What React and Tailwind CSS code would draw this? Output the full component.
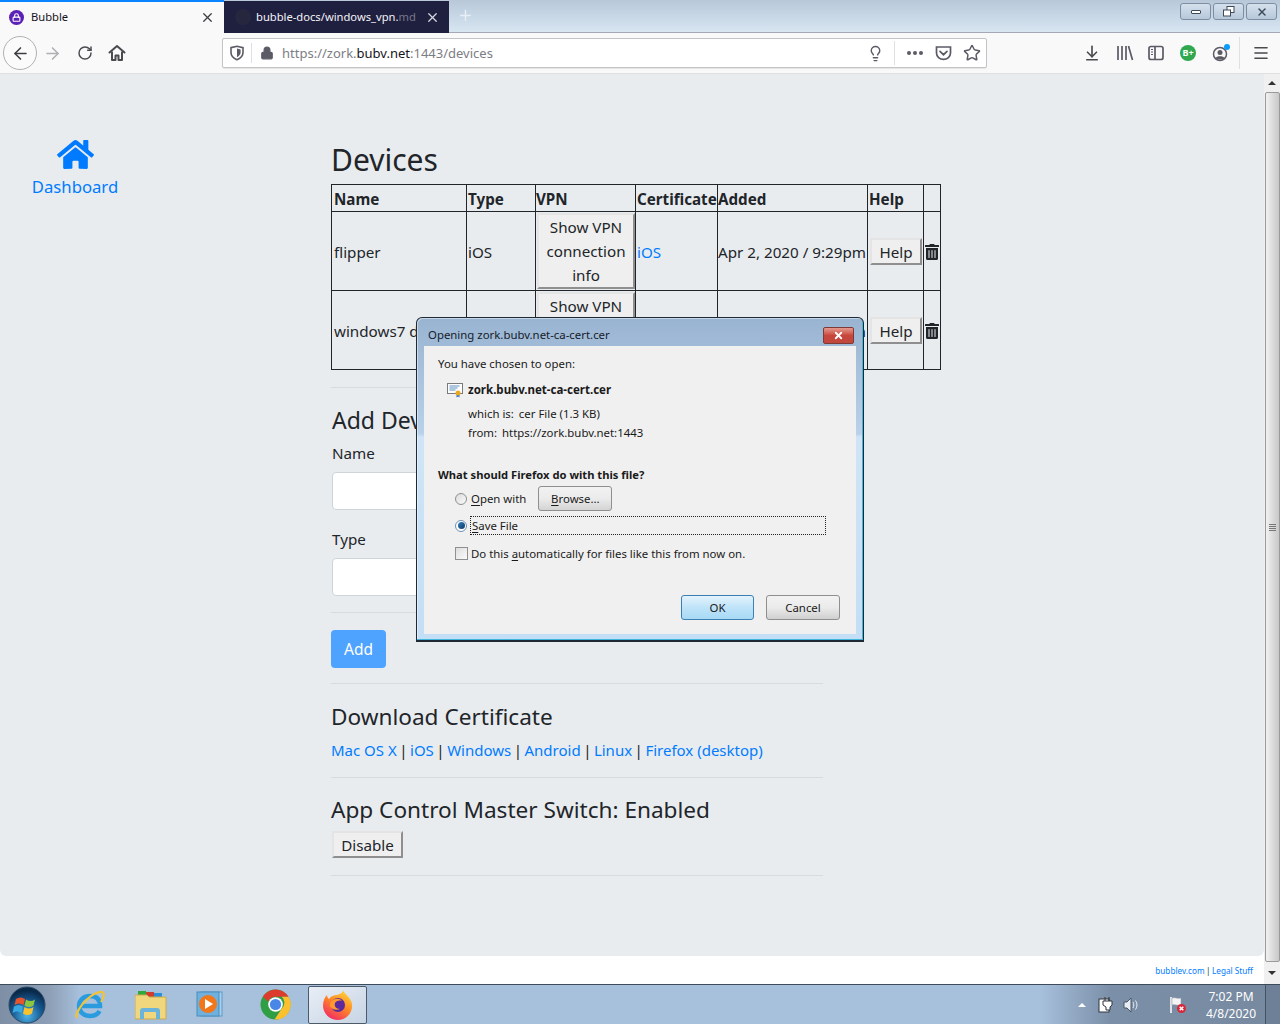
import { FaHome, FaTrashAlt } from 'react-icons/fa';
import { ArrowLeft, ArrowRight, RotateCw, Lock, Lightbulb, Star, ArrowDownToLine, X, Plus, Menu } from 'lucide-react';

const FONT = "font-['Noto_Sans','Open_Sans',sans-serif]";

function Shield() {
  return (
    <svg width="16" height="16" viewBox="0 0 16 16" fill="none" stroke="#5b5b66" strokeWidth="1.6">
      <path d="M2 2.6 8 1.2l6 1.4v5c0 3.4-2.6 5.800-6 7.200-3.400-1.400-6-3.800-6-7.200z" />
      <path d="M8 3.6 11.6 4.4v3.200c0 2-1.400 3.400-3.600 4.600z" fill="#5b5b66" stroke="none" />
    </svg>
  );
}

function Pocket() {
  return (
    <svg width="17" height="16" viewBox="0 0 17 16" fill="none" stroke="#5b5b66" strokeWidth="1.7">
      <path d="M1.500 2h14v6c0 3.600-3.200 6.400-7 6.400S1.500 11.600 1.500 8z" />
      <path d="m5 6.300 3.500 3.400L12 6.300" strokeLinecap="round" />
    </svg>
  );
}

function Library() {
  return (
    <svg width="18" height="16" viewBox="0 0 18 16" stroke="#5b5b66" strokeWidth="1.700" fill="none">
      <path d="M2 1v14M6 1v14M10 1v14M12.500 1l4 14" />
    </svg>
  );
}

function SidebarIcon() {
  return (
    <svg width="16" height="16" viewBox="0 0 16 16" fill="none" stroke="#5b5b66" strokeWidth="1.700">
      <rect x="1" y="1.500" width="14" height="13" rx="2" />
      <path d="M7 2v12" />
      <path d="M3 4.500h2M3 7h2M3 9.500h2" strokeWidth="1.200" />
    </svg>
  );
}

function Account() {
  return (
    <svg width="20" height="20" viewBox="0 0 20 20">
      <circle cx="9" cy="11" r="6.500" fill="none" stroke="#5b5b66" strokeWidth="1.500" />
      <circle cx="9" cy="9.500" r="2.500" fill="#5b5b66" />
      <path d="M4.500 15c1-2.500 8-2.500 9 0-2 2-7 2-9 0z" fill="#5b5b66" />
      <circle cx="16" cy="4" r="3" fill="#0a9dff" />
    </svg>
  );
}

function HomeSolid() {
  return (
    <svg width="18" height="18" viewBox="0 0 18 18" fill="none" stroke="#4a4a4f" strokeWidth="2">
      <path d="M1.500 8.500 9 2l7.500 6.500" strokeLinecap="round" strokeLinejoin="round" />
      <path d="M4 7.500V16h3.500v-4.500h3V16H14V7.500" strokeLinejoin="round" />
    </svg>
  );
}

function TabBar() {
  return (
    <div className="h-[33px] flex items-start bg-gradient-to-b from-[#b8c8d9] to-[#d8e6f2] border-b border-[#a3aab5] shrink-0 relative">
      <div className="w-[224px] h-[33px] bg-[#f9f9fa] border-t-2 border-[#0a84ff] flex items-center pl-[9px] pr-[9px] relative z-10">
        <div className="w-[15px] h-[15px] rounded-full bg-[#5b21b6] flex items-center justify-center">
          <Lock size={9} color="#ffffff" strokeWidth={3} />
        </div>
        <span className="ml-[7px] text-[11.200px] text-[#15141a]">Bubble</span>
        <X size={15} color="#3b3b42" className="ml-auto" strokeWidth={2} />
      </div>
      <div className="w-[225px] h-[32px] mt-px bg-[#1f2040] flex items-center pl-[11px] pr-[9px]">
        <div className="w-[16px] h-[16px] rounded-full bg-[#26273f]" />
        <span className="ml-[5px] pt-px text-[11.200px] text-[#f4f4f6] whitespace-nowrap">bubble-docs/windows_vpn.<span className="text-[#77778a]">md</span></span>
        <X size={15} color="#d7d7dd" className="ml-auto" strokeWidth={2} />
      </div>
      <Plus size={17} color="#e8eef5" className="ml-[8px] mt-[7px]" strokeWidth={2} />
      <div className="ml-auto flex gap-[2px] mt-[3px] mr-[3px]">
        {['min', 'max', 'close'].map((k) => (
          <div key={k} className="w-[31px] h-[17px] rounded-[3px] border border-[#7d8ea3] bg-gradient-to-b from-[#d5e0ec] to-[#b7c8da] flex items-center justify-center">
            {k === 'min' && <div className="w-[10px] h-[4px] border border-[#3d4a5a] bg-white rounded-[1px]" />}
            {k === 'max' && (
              <svg width="12" height="11" viewBox="0 0 12 11" fill="#fff" stroke="#3d4a5a">
                <rect x="4" y="0.500" width="7" height="6" />
                <rect x="0.500" y="4" width="7" height="6" />
              </svg>
            )}
            {k === 'close' && <X size={12} color="#3d4a5a" strokeWidth={3} />}
          </div>
        ))}
      </div>
    </div>
  );
}

function NavBar() {
  return (
    <div className="h-[41px] bg-[#f9f9fa] border-b border-[#e0e0e2] flex items-center shrink-0">
      <div className="w-[34px] h-[34px] ml-[3px] rounded-full border border-[#b1b1b3] bg-[#fbfbfb] flex items-center justify-center">
        <ArrowLeft size={19} color="#3e3e44" strokeWidth={2} />
      </div>
      <ArrowRight size={19} color="#b0b0b3" strokeWidth={2} className="ml-[6px]" />
      <RotateCw size={16} color="#4a4a4f" strokeWidth={2.200} className="ml-[15px]" />
      <div className="ml-[15px] flex"><HomeSolid /></div>
      <div className="ml-[96px] w-[765px] h-[30px] bg-white border border-[#c4c4c6] rounded-[2px] flex items-center shadow-[0_1px_1px_rgba(0,0,0,0.08)]">
        <div className="w-[28px] flex justify-center"><Shield /></div>
        <div className="w-px h-[20px] bg-[#e0e0e2]" />
        <Lock size={14} color="#5b5b66" fill="#5b5b66" strokeWidth={2} className="ml-[8px]" />
        <span className="ml-[8px] pt-px text-[13px] text-[#7d7d84]">
          https://zork.<span className="text-[#15141a]">bubv.net</span>:1443/devices
        </span>
        <Lightbulb size={17} color="#5b5b66" strokeWidth={2} className="ml-auto" />
        <div className="w-px h-[24px] bg-[#e0e0e2] ml-[10px]" />
        <div className="ml-[12px] flex gap-[2px]">
          <i className="w-[4px] h-[4px] rounded-full bg-[#5b5b66]" />
          <i className="w-[4px] h-[4px] rounded-full bg-[#5b5b66]" />
          <i className="w-[4px] h-[4px] rounded-full bg-[#5b5b66]" />
        </div>
        <div className="ml-[12px] flex"><Pocket /></div>
        <Star size={18} color="#5b5b66" strokeWidth={2} className="ml-[11px] mr-[5px]" />
      </div>
      <ArrowDownToLine size={18} color="#4a4a4f" strokeWidth={2.200} className="ml-[96px]" />
      <div className="ml-[15px] flex"><Library /></div>
      <div className="ml-[14px] flex"><SidebarIcon /></div>
      <div className="ml-[16px] w-[16px] h-[16px] rounded-full bg-[#2fa84f] text-white text-[9px] font-bold flex items-center justify-center">B+</div>
      <div className="ml-[15px] flex"><Account /></div>
      <div className="w-px h-[32px] bg-[#e0e0e2] ml-[8px]" />
      <Menu size={18} color="#4a4a4f" strokeWidth={2.200} className="ml-[12px]" />
    </div>
  );
}

function OutsetButton({ children, className = '' }) {
  return (
    <button className={`bg-[#efefef] border-2 border-t-[#e4e4e4] border-l-[#e4e4e4] border-r-[#8f8f8f] border-b-[#8f8f8f] text-[#212529] text-[15.200px] leading-[24px] ${className}`}>
      {children}
    </button>
  );
}

const devices = [
  { name: 'flipper', type: 'iOS', cert: 'iOS', added: 'Apr 2, 2020 / 9:29pm' },
  { name: 'windows7 desktop', type: 'Windows', cert: 'Windows', added: 'Apr 8, 2020 / 6:50pm' },
];

function DeviceTable() {
  const th = 'border border-[#212529] px-px pt-[2px] text-left font-bold align-bottom';
  const td = 'border border-[#212529] px-px pt-[2px] pb-0 align-middle whitespace-nowrap';
  return (
    <table className="table-fixed w-[609px] border-collapse text-[15.200px] leading-[24px] text-[#212529]">
      <colgroup>
        <col className="w-[135px]" />
        <col className="w-[69px]" />
        <col className="w-[100px]" />
        <col className="w-[82px]" />
        <col className="w-[150px]" />
        <col className="w-[56px]" />
        <col className="w-[17px]" />
      </colgroup>
      <thead>
        <tr className="h-[27px]">
          <th className={`${th} pl-[2px]`}>Name</th>
          <th className={th}>Type</th>
          <th className={`${th} pl-0`}>VPN</th>
          <th className={th}>Certificate</th>
          <th className={`${th} pl-0`}>Added</th>
          <th className={th}>Help</th>
          <th className={th}></th>
        </tr>
      </thead>
      <tbody>
        {devices.map((d) => (
          <tr key={d.name} className="h-[79px]">
            <td className={`${td} pl-[2px]`}>{d.name}</td>
            <td className={td}>{d.type}</td>
            <td className="border border-[#212529] p-0 align-middle">
              <OutsetButton className="w-[98px] h-[76px] block ml-px">Show VPN connection info</OutsetButton>
            </td>
            <td className={`${td} text-[#007bff]`}>{d.cert}</td>
            <td className={`${td} pl-0`}>{d.added}</td>
            <td className="border border-[#212529] p-0 align-middle">
              <OutsetButton className="w-[52px] h-[27px] block ml-[2px] leading-[22px]">Help</OutsetButton>
            </td>
            <td className="border border-[#212529] p-0 pt-px align-middle">
              <FaTrashAlt size={16} color="#212529" className="mx-auto" />
            </td>
          </tr>
        ))}
      </tbody>
    </table>
  );
}

function Rule({ className = '' }) {
  return <div className={`w-[492px] h-px bg-[#d8dadd] ${className}`} />;
}

function Page() {
  return (
    <div className="h-[882px] bg-[#e9ecef] rounded-bl-[6px] rounded-br-[6px] flex">
      <div className="w-[150px] pt-[62px] flex flex-col items-center text-[#007bff]">
        <FaHome size={37} color="#007bff" />
        <span className="text-[16.700px] leading-[28px]">Dashboard</span>
      </div>
      <div className="ml-[181px] pt-[66px] text-[#212529]">
        <h2 className="text-[30px] leading-[40px] h-[44px]">Devices</h2>
        <DeviceTable />
        <Rule className="mt-[17px]" />
        <h3 className="text-[23px] leading-[32px] mt-[16px] pl-px">Add Device</h3>
        <div className="text-[15.200px] leading-[24px] mt-[5px] pl-px">Name</div>
        <div className="w-[491px] h-[38px] bg-white border border-[#ced4da] rounded-[4px] mt-[7px] ml-px" />
        <div className="text-[15.200px] leading-[24px] mt-[17px] pl-px">Type</div>
        <div className="w-[491px] h-[38px] bg-white border border-[#ced4da] rounded-[4px] mt-[7px] ml-px" />
        <Rule className="mt-[16px]" />
        <button className="mt-[17px] w-[55px] h-[38px] pt-[2px] bg-[#4da3ff] text-white text-[15.500px] rounded-[4px]">Add</button>
        <Rule className="mt-[15px]" />
        <h3 className="text-[22.600px] leading-[32px] mt-[17px]">Download Certificate</h3>
        <div className="text-[15px] leading-[24px] mt-[5px] whitespace-nowrap flex gap-[2.500px]">
          <span className="text-[#007bff]">Mac OS X</span><span>|</span><span className="text-[#007bff]">iOS</span><span>|</span><span className="text-[#007bff]">Windows</span><span>|</span><span className="text-[#007bff]">Android</span><span>|</span><span className="text-[#007bff]">Linux</span><span>|</span><span className="text-[#007bff]">Firefox (desktop)</span>
        </div>
        <Rule className="mt-[15px]" />
        <h3 className="text-[22.600px] leading-[32px] mt-[16px] whitespace-nowrap">App Control Master Switch: Enabled</h3>
        <OutsetButton className="w-[71px] h-[27px] mt-[5px] ml-px block leading-[22px]">Disable</OutsetButton>
        <Rule className="mt-[17px]" />
      </div>
    </div>
  );
}

function Scrollbar() {
  return (
    <div className="w-[16px] bg-[#f0f0f0] flex flex-col items-center shrink-0">
      <div className="h-[18px] flex items-center">
        <div className="w-0 h-0 border-l-[4px] border-r-[4px] border-b-[4px] border-l-transparent border-r-transparent border-b-[#333333]" />
      </div>
      <div className="w-[15px] h-[870px] border border-[#9a9a9a] rounded-[2px] bg-gradient-to-r from-[#f2f2f2] via-[#dcdcdc] to-[#c8c8c8] flex flex-col items-center justify-center gap-px">
        <i className="w-[7px] h-px bg-[#777777]" />
        <i className="w-[7px] h-px bg-[#777777]" />
        <i className="w-[7px] h-px bg-[#777777]" />
        <i className="w-[7px] h-px bg-[#777777]" />
      </div>
      <div className="h-[22px] flex items-center">
        <div className="w-0 h-0 border-l-[4px] border-r-[4px] border-t-[4px] border-l-transparent border-r-transparent border-t-[#333333]" />
      </div>
    </div>
  );
}

function CertIcon() {
  return (
    <svg width="16" height="15" viewBox="0 0 16 15">
      <rect x="0.500" y="0.500" width="15" height="10" fill="#fdfdfd" stroke="#7a7a7a" />
      <path d="M2.500 3h10M2.500 5h8M2.500 7h6" stroke="#5f8fc4" />
      <path d="M9.500 11v3.500l1.500-1 1.500 1V11" fill="#2f6fd0" />
      <circle cx="11" cy="10" r="2.500" fill="#e8a820" />
    </svg>
  );
}

function Underlined({ children }) {
  return <span className="underline underline-offset-2">{children}</span>;
}

function Dialog() {
  return (
    <div className="absolute left-[416px] top-[317px] w-[448px] h-[325px] border border-[#1d2a36] border-b-2 rounded-t-[6px] bg-[linear-gradient(to_bottom,#99b4d1_0,#b9d1ea_36%,#cfe5f7_37%,#c3def5_100%)] shadow-[inset_-1px_-1px_0_#3fb6dc,inset_1px_1px_0_rgba(255,255,255,0.450)] z-20">
      <div className="h-[28px] flex items-center pl-[11px] pt-[6px] relative">
        <span className="text-[11.400px] text-[#15202b]">Opening zork.bubv.net-ca-cert.cer</span>
        <div className="absolute left-[406px] top-[9px] w-[31px] h-[17px] rounded-[2px] border border-[#7e3a36] bg-gradient-to-b from-[#e59a8f] via-[#c8463c] to-[#c0473d] flex items-center justify-center">
          <X size={11} color="#ffffff" strokeWidth={4} />
        </div>
      </div>
      <div className="mx-[7px] h-[288px] bg-[#f0f0f0] text-[11.400px] leading-[16px] text-[#1a1a1a] pl-[14px] pt-[10px]">
        <div>You have chosen to open:</div>
        <div className="flex items-center mt-[10px] ml-[9px]">
          <CertIcon />
          <span className="ml-[5px] font-bold text-[11.500px]">zork.bubv.net-ca-cert.cer</span>
        </div>
        <div className="mt-[8px] ml-[30px]">which is:<span className="ml-[5px]">cer File (1.3 KB)</span></div>
        <div className="mt-[3px] ml-[30px]">from:<span className="ml-[5px]">https://zork.bubv.net:1443</span></div>
        <div className="mt-[26px] font-bold text-[11.200px]">What should Firefox do with this file?</div>
        <div className="flex items-center mt-[3px] ml-[17px] h-[25px]">
          <div className="w-[12px] h-[12px] rounded-full border border-[#8e8f8f] bg-gradient-to-br from-[#dcdcdc] to-[#fafafa]" />
          <span className="ml-[4px] pt-px"><Underlined>O</Underlined>pen with</span>
          <div className="ml-[12px] w-[74px] h-[25px] rounded-[3px] border border-[#8e8f8f] bg-gradient-to-b from-[#f2f2f2] via-[#ebebeb] to-[#d4d4d4] flex items-center justify-center">
            <span><Underlined>B</Underlined>rowse...</span>
          </div>
        </div>
        <div className="flex items-center mt-[5px] ml-[17px]">
          <div className="w-[12px] h-[12px] rounded-full border border-[#6d8fb0] bg-white flex items-center justify-center">
            <div className="w-[7px] h-[7px] rounded-full bg-gradient-to-br from-[#2e7fc0] to-[#123a66]" />
          </div>
          <div className="ml-[3px] w-[356px] h-[19px] border border-dotted border-[#222222] flex items-center pl-px">
            <span><Underlined>S</Underlined>ave File</span>
          </div>
        </div>
        <div className="flex items-center mt-[10px] ml-[17px]">
          <div className="w-[13px] h-[13px] border border-[#8e8f8f] bg-gradient-to-br from-[#dedede] to-[#fafafa]" />
          <span className="ml-[3px] pt-px">Do this <Underlined>a</Underlined>utomatically for files like this from now on.</span>
        </div>
        <div className="flex justify-end gap-[12px] mt-[33px] mr-[16px]">
          <div className="w-[73px] h-[25px] rounded-[3px] border border-[#3c7fb1] bg-gradient-to-b from-[#e4f3fc] via-[#bfe3f9] to-[#a7d9f5] flex items-center justify-center">OK</div>
          <div className="w-[74px] h-[25px] rounded-[3px] border border-[#8e8f8f] bg-gradient-to-b from-[#f2f2f2] via-[#ebebeb] to-[#d0d0d0] flex items-center justify-center">Cancel</div>
        </div>
      </div>
    </div>
  );
}

function StartOrb() {
  return (
    <svg width="38" height="38" viewBox="0 0 38 38">
      <defs>
        <radialGradient id="orb" cx="50%" cy="80%" r="70%">
          <stop offset="0" stopColor="#4fb4e8" />
          <stop offset="0.600" stopColor="#15578f" />
          <stop offset="1" stopColor="#0a2a4a" />
        </radialGradient>
      </defs>
      <circle cx="19" cy="19" r="18" fill="url(#orb)" stroke="#2c4a66" />
      <path d="M8 13c3-2 6-2 9 0l-1.500 6c-3-2-6-2-9 0z" fill="#e8542c" />
      <path d="M18 13.500c3 2 6 2 9 0l-1.500 6c-3 2-6 2-9 0z" fill="#8cc63f" />
      <path d="M6 20.500c3-2 6-2 9 0L13.500 27c-3-2-6-2-9 0z" fill="#39a7e0" />
      <path d="M16.500 21c3 2 6 2 9 0L24 27.500c-3 2-6 2-9 0z" fill="#f8c32c" />
    </svg>
  );
}

function IeIcon() {
  return (
    <svg width="32" height="32" viewBox="0 0 32 32" fill="none">
      <path d="M6 17h20c0-7-4-10-10-10S5 11 5 17s5 10 11 10c4 0 8-2 9.500-5" stroke="#2b9be0" strokeWidth="4.500" />
      <path d="M3 29C0 25 12 6 26 3c5-1 5 4 1 10" stroke="#f4c430" strokeWidth="2" />
    </svg>
  );
}

function FolderIcon() {
  return (
    <svg width="32" height="31" viewBox="0 0 32 31">
      <rect x="3" y="2" width="8" height="5" fill="#2eaa3a" />
      <rect x="11" y="3" width="8" height="5" fill="#d13b2e" />
      <rect x="19" y="4" width="8" height="5" fill="#2b8fd8" />
      <path d="M0 6h12l2 2h17v22H0z" fill="#f0d77e" stroke="#c9a94f" />
      <path d="M5 30v-8c0-2 1-3 3-3h14c2 0 3 1 3 3v8h-4v-7H9v7z" fill="#6ab4dc" />
    </svg>
  );
}

function MediaIcon() {
  return (
    <svg width="30" height="28" viewBox="0 0 30 28">
      <rect x="5" y="1" width="21" height="24" fill="#a8d0ec" stroke="#5d9ac6" />
      <rect x="1" y="1" width="22" height="24" fill="#6fb0dc" stroke="#4a8cbc" />
      <circle cx="12" cy="13" r="9" fill="#f2761a" />
      <path d="M9 8l8 5-8 5z" fill="#ffffff" />
    </svg>
  );
}

function ChromeIcon() {
  return (
    <svg width="31" height="31" viewBox="0 0 32 32">
      <circle cx="16" cy="16" r="15.500" fill="#2f9e44" />
      <path d="M3 8a15.500 15.500 0 0 1 26.500 0H16a8 8 0 0 0-7.500 5z" fill="#dd3b2e" />
      <path d="M29.500 8A15.500 15.500 0 0 1 15 31.500L22.500 20a8 8 0 0 0 0-12z" fill="#fbc02d" />
      <circle cx="16" cy="16" r="7.500" fill="#ffffff" />
      <circle cx="16" cy="16" r="5.800" fill="#4a86e8" />
    </svg>
  );
}

function FirefoxIcon() {
  return (
    <svg width="32" height="32" viewBox="0 0 32 32">
      <defs>
        <linearGradient id="ff" x1="0.800" y1="0" x2="0.200" y2="1">
          <stop offset="0" stopColor="#ffd93b" />
          <stop offset="0.450" stopColor="#ff8a24" />
          <stop offset="1" stopColor="#f0246a" />
        </linearGradient>
      </defs>
      <path d="M21 1c1 4 8 7 9 14 1 9-6 16-14 16S1 25 1 16C1 12 3 8 5 6c0 2 1 3 2 4 2-3 5-4 8-4 3-1 6-2 6-5z" fill="url(#ff)" />
      <circle cx="16" cy="16" r="7" fill="#5b2a9e" />
      <path d="M9 13c3-4 9-4 11-1-3-1-6 0-7 2-1 3 1 6 5 6-4 2-9 0-10-3 0-2 0-3 1-4z" fill="#ff9a2e" />
    </svg>
  );
}

function Taskbar() {
  return (
    <div className="h-[40px] border-t border-[#3e4b5a] bg-[linear-gradient(to_right,#7d8ea5_0,#8d9fb6_50px,#a7c0dc_80px,#a7c0dc_1040px,#7b8fa8_1110px,#76899f_100%)] flex items-center relative shrink-0">
      <div className="ml-[8px] flex"><StartOrb /></div>
      <div className="ml-[28px] flex"><IeIcon /></div>
      <div className="ml-[29px] flex"><FolderIcon /></div>
      <div className="ml-[29px] flex"><MediaIcon /></div>
      <div className="ml-[34px] flex"><ChromeIcon /></div>
      <div className="ml-[17px] w-[59px] h-[38px] rounded-[2px] border border-[#4c5a6a] bg-gradient-to-br from-[#e8eef6] to-[#c7d4e4] flex items-center justify-center">
        <FirefoxIcon />
      </div>
      <div className="ml-[711px] w-0 h-0 border-l-[4px] border-r-[4px] border-b-[4px] border-l-transparent border-r-transparent border-b-white" />
      <svg width="16" height="17" viewBox="0 0 16 17" className="ml-[12px]" fill="#ffffff" stroke="#30363d">
        <rect x="1" y="3" width="10" height="13" />
        <path d="M7 1v4M11 1v4M5 5h9v4l-2 2v3H8v-3L5 9z" />
      </svg>
      <svg width="16" height="16" viewBox="0 0 16 16" className="ml-[9px]" fill="#e8edf3" stroke="#4a5663">
        <path d="M1 5h3l4-4v14l-4-4H1z" />
        <path d="M10 5c1 2 1 4 0 6M12.500 3.500c2 3 2 6 0 9" fill="none" stroke="#e8edf3" />
      </svg>
      <svg width="18" height="18" viewBox="0 0 18 18" className="ml-[30px]">
        <path d="M2 1v16" stroke="#ffffff" strokeWidth="1.500" />
        <path d="M3 2c3-1 5 1 9 0v7c-4 1-6-1-9 0z" fill="#f5f5f5" stroke="#8a94a0" strokeWidth="0.500" />
        <circle cx="12.500" cy="12.500" r="4.500" fill="#d8263a" />
        <path d="m10.700 10.700 3.600 3.600m0-3.600-3.600 3.600" stroke="#ffffff" strokeWidth="1.500" />
      </svg>
      <div className="ml-[17px] w-[54px] pt-[1px] text-[12px] leading-[17px] text-center text-white whitespace-nowrap">
        <div>7:02 PM</div>
        <div>4/8/2020</div>
      </div>
      <div className="absolute right-0 top-0 bottom-0 w-[15px] bg-[#6d8097] border-l border-[#465363]" />
    </div>
  );
}

export default function App() {
  return (
    <div className={`w-[1280px] h-[1024px] relative overflow-hidden flex flex-col bg-white ${FONT}`}>
      <TabBar />
      <NavBar />
      <div className="flex-1 flex min-h-0">
        <div className="flex-1 flex flex-col min-w-0">
          <Page />
          <div className="flex-1 flex items-center justify-end pr-[11px] pt-[2px] text-[8.200px] text-[#007bff]">
            <span>bubblev.com</span>
            <span className="text-[#212529] mx-[1.500px]">|</span>
            <span>Legal Stuff</span>
          </div>
        </div>
        <Scrollbar />
      </div>
      <Taskbar />
      <Dialog />
    </div>
  );
}
